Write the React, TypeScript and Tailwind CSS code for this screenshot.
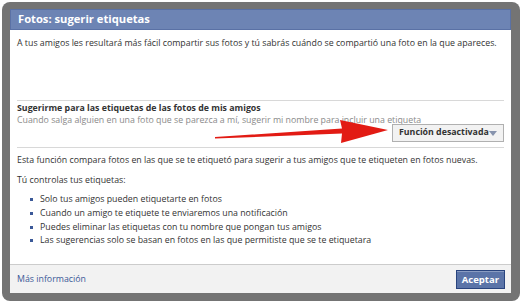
export default function App() {
  const bullets = [
    "Solo tus amigos pueden etiquetarte en fotos",
    "Cuando un amigo te etiquete te enviaremos una notificación",
    "Puedes eliminar las etiquetas con tu nombre que pongan tus amigos",
    "Las sugerencias solo se basan en fotos en las que permitiste que se te etiquetara",
  ];

  return (
    <div className="relative w-[522px] h-[307px] bg-white pt-[2px] px-[2px] font-['Open_Sans',sans-serif]">
      <div className="rounded-[8px] bg-[#747474] pt-[7px] pb-[8px] pl-[8px] pr-[9px]">
        <div className="bg-white">
          <div className="h-[21px] bg-[#6d84b4] border border-[#5a71a5] flex items-center px-[7px]">
            <span className="text-white font-bold text-[11.2px]">Fotos: sugerir etiquetas</span>
          </div>
          <div className="px-[7px] pt-[7px] text-[8.8px] text-[#333]">
            <p className="leading-[12px] whitespace-nowrap">
              A tus amigos les resultará más fácil compartir sus fotos y tú sabrás cuándo se compartió una foto en la que apareces.
            </p>
            <div className="mt-[51px] border-t border-b border-[#d8d8d8] pt-[1px] pb-[5px]">
              <p className="font-bold leading-[12px]">Sugerirme para las etiquetas de las fotos de mis amigos</p>
              <p className="text-[#8a8a8a] leading-[12px]">
                Cuando salga alguien en una foto que se parezca a mí, sugerir mi nombre para incluir una etiqueta
              </p>
              <div className="flex justify-end -mt-[2px]">
                <button className="h-[18px] w-[112px] whitespace-nowrap bg-[#f2f2f2] border border-[#b0b0b0] flex items-center justify-between pl-[6px] pr-[6px] font-bold text-[#333]">
                  <span>Función desactivada</span>
                  <span className="w-0 h-0 border-l-[4px] border-r-[4px] border-t-[5px] border-l-transparent border-r-transparent border-t-[#8793ad]" />
                </button>
              </div>
            </div>
            <p className="mt-[6px] leading-[12px] whitespace-nowrap">
              Esta función compara fotos en las que se te etiquetó para sugerir a tus amigos que te etiqueten en fotos nuevas.
            </p>
            <p className="mt-[8px] leading-[12px]">Tú controlas tus etiquetas:</p>
            <ul className="mt-[7px] pl-[13px] pb-[16px]">
              {bullets.map((b) => (
                <li key={b} className="flex items-center gap-[7px] h-[13.7px]">
                  <span className="w-[3px] h-[3px] bg-[#3b5998]" />
                  <span>{b}</span>
                </li>
              ))}
            </ul>
          </div>
          <div className="h-[29px] bg-[#f2f2f2] border-t border-[#cccccc] flex items-center justify-between pl-[7px] pr-[6px]">
            <a className="text-[#3b5998] text-[8.8px] mt-[2px]">Más información</a>
            <button className="h-[19px] mt-[2px] px-[5px] bg-[#5b74a8] border border-[#29447e] text-white font-bold text-[9.5px] shadow-[inset_0_1px_0_#8a9cc2]">
              Aceptar
            </button>
          </div>
        </div>
      </div>
      <svg className="absolute left-0 top-0" width="522" height="307" viewBox="0 0 522 307">
        <polygon
          points="215,137 342,128.5 340,120 388,130 341,143 342,133.5 215,138.5"
          fill="#e21b14"
        />
      </svg>
    </div>
  );
}
